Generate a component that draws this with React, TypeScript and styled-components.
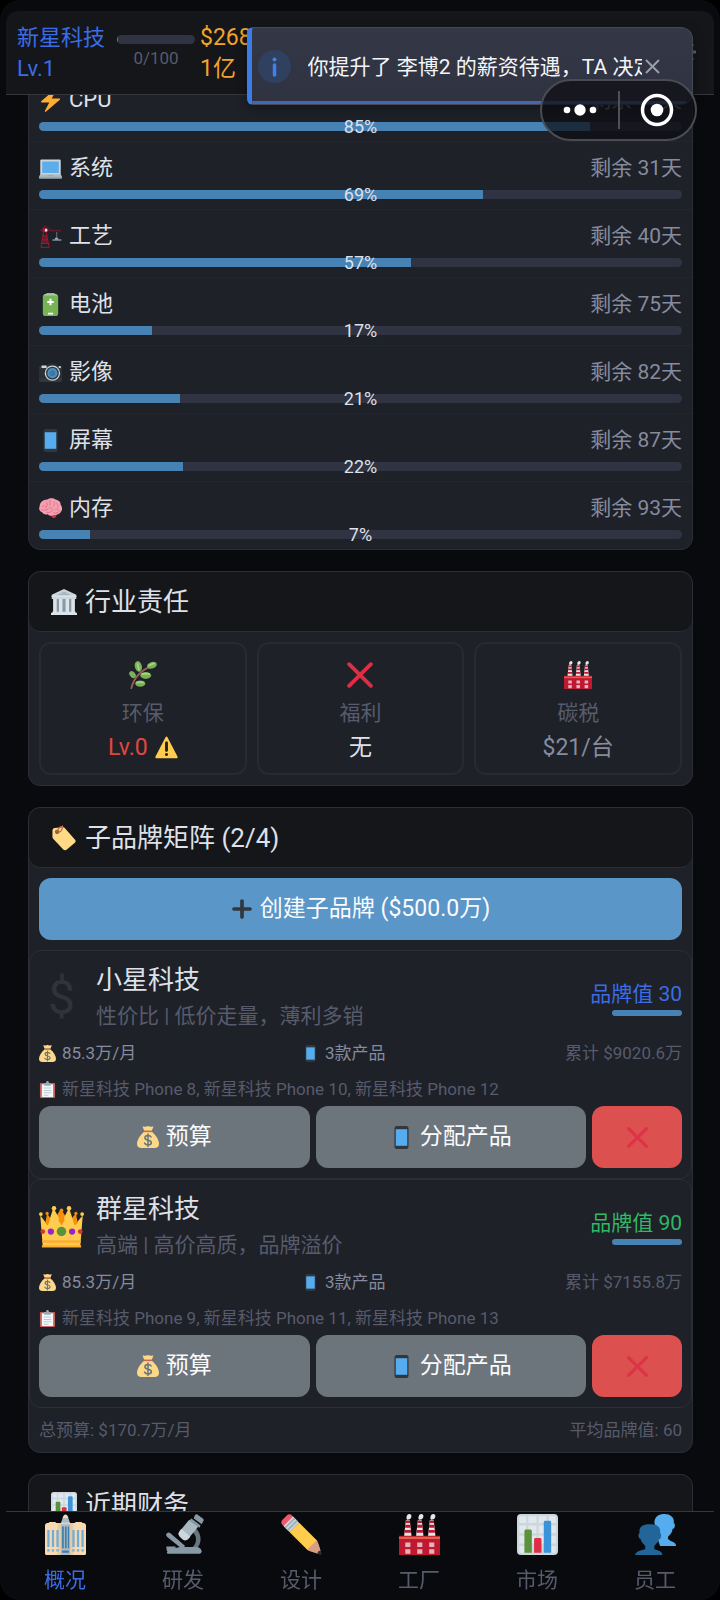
import React from "react";
import styled, { createGlobalStyle } from "styled-components";

const c = {
  page: "#090a0e",
  bar: "#15161a",
  card: "#1e2128",
  line: "#2b2e35",
  track: "#303341",
  fill: "#4682b4",
  text: "#dfe0e8",
  muted: "#868b9d",
  dim: "#575b6c",
  blue: "#3a6de6",
  orange: "#f2a32c",
  green: "#2fb866",
  red: "#e0483f",
};

const GlobalStyle = createGlobalStyle`
  *, *::before, *::after { box-sizing: border-box; }
  html, body { margin: 0; background: #000; }
  body {
    overflow: hidden;
    color: ${c.text};
    font-family: Roboto, "Noto Sans CJK SC", sans-serif;
    font-size: 22px;
    line-height: 32px;
  }
  button { font: inherit; color: inherit; border: 0; padding: 0; margin: 0; background: none; cursor: pointer; }
  h2, h3, p { margin: 0; font-weight: 400; }
`;

/* ---------- icons ---------- */

const Svg = styled.svg<{ $size: number }>`
  display: block;
  flex: none;
  width: ${(p) => p.$size}px;
  height: ${(p) => p.$size}px;
`;

const glyphs: Record<string, React.ReactNode> = {
  bolt: (
    <path fill="#FFAC33" d="M32.938 15.651C32.792 15.26 32.418 15 32 15H19.925L26.89 1.458c.219-.426.106-.947-.271-1.243C26.437.071 26.218 0 26 0c-.233 0-.466.082-.653.243L18 6.588 3.347 19.243c-.316.273-.43.714-.284 1.105S3.582 21 4 21h12.075L9.11 34.542c-.219.426-.106.947.271 1.243.182.144.401.215.619.215.233 0 .466-.082.653-.243L18 29.412l14.653-12.655c.317-.273.43-.714.285-1.106z" />
  ),
  laptop: (
    <>
      <path fill="#CCD6DD" d="M34 29.1c0 1-1 1.9-2 1.9H4c-1 0-2-.9-2-1.9V5.9C2 4.900 3 4 4 4h28c1 0 2 .9 2 1.900z" />
      <path fill="#5DADEC" d="M5 7h26v18H5z" />
      <path fill="#AEBBC1" d="M2 27h32l2 4v2H0v-2z" />
      <path fill="#9AAAB4" d="M0 31h36v2c0 .6-.5 1-1 1H1c-.5 0-1-.4-1-1zM14 28h8l1 2H13z" />
    </>
  ),
  crane: (
    <>
      <path fill="none" stroke="#A0192F" strokeWidth="1.500" d="M7 11L3 35M11 11l5 24M6 17h7M5 23h9M4 29h11M6 17l8 6M13 17l-8 6M5 23l10 6M14 23L4 29M3 35h13" />
      <path fill="none" stroke="#7A1A2B" strokeWidth="1.400" d="M9 1L2 9h32M9 1l12 8M9 1v8M23 7v3M28 7v3M33 7v3" />
      <path fill="#BE1931" d="M6 5h6v6H6z" />
      <path fill="#E6E7E8" d="M9.500 6h3.500v4H9.500z" />
      <path fill="#66757F" d="M27 11h1.500v11H27zM21 22h14v3H21z" />
      <path fill="#99AAB5" d="M25 20h5v3h-5z" />
    </>
  ),
  battery: (
    <>
      <path fill="#99AAB5" d="M12 0h12v4H12z" />
      <rect x="6" y="2" width="24" height="34" rx="4" fill="#77B255" />
      <path fill="#A6C9B0" d="M7 4c1-2 3-3 5-3h12c2 0 4 1 5 3z" />
      <path fill="#FFF" d="M16.500 9h3v3.500H23v3h-3.500V19h-3v-3.500H13v-3h3.500zM14 31h8v2.500h-8z" />
    </>
  ),
  camera: (
    <>
      <path fill="#31373D" d="M2 8h32c1 0 2 1 2 2v20c0 2-1 3-3 3H3c-2 0-3-1-3-3V10c0-1 1-2 2-2z" />
      <path fill="#292F33" d="M12 8l3-4h12l3 4zM0 13h36v14H0z" />
      <path fill="#CCD6DD" d="M4 7h8v4H4zM31 8h3v3h-3z" />
      <circle cx="21" cy="19" r="12" fill="#CCD6DD" />
      <circle cx="21" cy="19" r="10" fill="#31373D" />
      <circle cx="21" cy="19" r="8" fill="#4A8FC0" />
      <circle cx="21" cy="19" r="4.500" fill="#3B78A8" />
    </>
  ),
  phone: (
    <>
      <path fill="#31373D" d="M11 36s-4 0-4-4V4s0-4 4-4h14s4 0 4 4v28s0 4-4 4H11z" />
      <path fill="#55ACEE" d="M9 5h18v26H9z" />
    </>
  ),
  brain: (
    <>
      <path fill="#DD2E44" d="M19 27c2-1 6-1 8 0 1 3-1 6-4 6-2 0-2-2-4-3z" />
      <path fill="#F4A0B0" d="M13 4c4-3 10-2 13 0 5 1 8 4 8 8 3 4 3 9-1 13-3 3-7 3-10 3-3 2-7 2-9-1-4 1-8 0-9-3-4-1-6-5-4-9 0-6 5-11 12-11z" />
      <path fill="none" stroke="#E0758A" strokeWidth="1.500" strokeLinecap="round" d="M5 15c3-3 6-1 6 2M11 8c2 1 3 4 1 7M17 5v8M16 17c3-1 5 1 5 4M23 7c2 2 2 6-1 8M27 10c3 1 4 5 2 7M4 20c4 1 8 1 10-1M12 24c3 1 7 0 8-2M25 20c2-2 6-1 7 2M23 25c4 1 7-1 8-2" />
    </>
  ),
  hall: (
    <>
      <path fill="#66757F" d="M3 14h30v17H3z" />
      <path fill="#8899A6" d="M8 14h3v17H8zM16 14h4v17h-4zM25 14h3v17h-3z" />
      <path fill="#CCD6DD" d="M18 0L1 8v6h34V8z" />
      <path fill="#AAB8C2" d="M18 3L7 9h22z" />
      <path fill="#DCE4E9" d="M3 14h5v17H3zM11 14h5v17h-5zM20 14h5v17h-5zM28 14h5v17h-5zM2 31h32v2H2zM0 33h36v3H0zM1 9h34v2H1z" />
    </>
  ),
  herb: (
    <>
      <path fill="none" stroke="#A0605A" strokeWidth="2.200" strokeLinecap="round" d="M3 35c3-13 12-23 27-29" />
      <g fill="#77B255">
        <ellipse cx="12" cy="7" rx="4.500" ry="7" transform="rotate(-14 12 7)" />
        <ellipse cx="4.500" cy="17.500" rx="3.500" ry="5" transform="rotate(-40 4.500 17.500)" />
        <ellipse cx="29.500" cy="5.500" rx="6.500" ry="4.200" transform="rotate(-20 29.500 5.500)" />
        <ellipse cx="21.500" cy="18.500" rx="7" ry="4.500" />
        <ellipse cx="14.500" cy="29" rx="6.500" ry="4" />
      </g>
      <path fill="none" stroke="#A6D388" strokeWidth="2.200" d="M11 3c0 3 1 6 2 9M25 6c3-1 6-3 8-3M16 17c4-1 8-1 11 0M9 28c4-1 7-1 10 0" />
    </>
  ),
  cross: (
    <path fill="#DD2E44" d="M21.533 18.002L33.768 5.768c.976-.976.976-2.559 0-3.535-.977-.977-2.559-.977-3.535 0L17.998 14.467 5.764 2.233c-.976-.977-2.56-.977-3.535 0-.977.976-.977 2.559 0 3.535l12.234 12.234L2.201 30.265c-.977.977-.977 2.559 0 3.535.488.488 1.128.732 1.768.732s1.280-.244 1.768-.732l12.262-12.262 12.234 12.234c.488.488 1.128.732 1.768.732.64 0 1.279-.244 1.768-.732.976-.977.976-2.559 0-3.535L21.533 18.002z" />
  ),
  factory: (
    <>
      <path fill="#E6E7E8" d="M6 5.500h3.500l1.500 14H4.500zM16.500 5.500H20l1.500 14H15zM27 5.500h3.500l1.500 14h-6.500z" />
      <path fill="#BE1931" d="M5.800 6h4v2h-4zM5.400 9.500h4.800V12H5.400zM5 14h5.500v2.500H5zM16.300 6h4v2h-4zM15.900 9.500h4.800V12h-4.800zM15.500 14H21v2.500h-5.500zM26.800 6h4v2h-4zM26.400 9.500h4.800V12h-4.800zM26 14h5.500v2.500H26z" />
      <path fill="#E6E7E8" d="M7 5c-1-2 0-5 2-5 3 0 2 4 .5 4.500zM17.500 5c-1-2 0-5 2-5 3 0 2 4 .5 4.500zM28 5c-1-2 0-5 2-5 3 0 2 4 .5 4.500z" />
      <path fill="#BE1931" d="M0 19h36v17c0 1-1 1-1 1H1s-1 0-1-1z" />
      <path fill="#E0604A" d="M0 20h36v2H0z" />
      <path fill="#E1B4BC" d="M5.500 25H10v4H5.500zM16 25h4.500v4H16zM26.500 25H31v4h-4.500zM5.500 31H10v4H5.500zM16 31h4.500v4H16zM26.500 31H31v4h-4.500z" />
    </>
  ),
  warning: (
    <>
      <path fill="#FFCC4D" d="M2.653 35C.811 35-.001 33.662.847 32.027L16.456 1.972c.849-1.635 2.238-1.635 3.087 0l15.609 30.056c.85 1.634.037 2.972-1.805 2.972H2.653z" />
      <path fill="#231F20" d="M15.583 28.953c0-1.333 1.085-2.418 2.419-2.418 1.333 0 2.418 1.085 2.418 2.418 0 1.334-1.086 2.419-2.418 2.419-1.334 0-2.419-1.085-2.419-2.419zm.186-18.293c0-1.302.961-2.108 2.232-2.108 1.241 0 2.233.837 2.233 2.108v11.938c0 1.271-.992 2.108-2.233 2.108-1.271 0-2.232-.807-2.232-2.108V10.66z" />
    </>
  ),
  tag: (
    <>
      <path fill="#FFD983" d="M2 8c0-2 1-4 3-4l11-1c1 0 2 0 3 1l14 16c1.500 1.500 1.500 3 0 4.500L22 34c-1.500 1.500-3.500 1.500-5 0L3 19c-1-1-1-2-1-3z" />
      <circle cx="8.500" cy="9.500" r="3" fill="#7C5A3A" />
      <path fill="none" stroke="#C1694F" strokeWidth="1.600" strokeLinecap="round" d="M8 9c2-4 5-7 8-7M9 10c4 0 7-3 7-9" />
    </>
  ),
  plus: (
    <path fill="#31373D" d="M31 15H21V5c0-1.657-1.343-3-3-3s-3 1.343-3 3v10H5c-1.657 0-3 1.343-3 3s1.343 3 3 3h10v10c0 1.657 1.343 3 3 3s3-1.343 3-3V21h10c1.657 0 3-1.343 3-3s-1.343-3-3-3z" />
  ),
  bag: (
    <>
      <path fill="#FDD888" d="M12 9h12c7 6 12 14 12 20 0 5-3 7-7 7H7c-4 0-7-2-7-7C0 23 5 15 12 9z" />
      <path fill="#FDD888" d="M9 1c3-1 4 1 6 0s4-1 6 0 4-1 6 0l-3 7H12z" />
      <path fill="#BF6952" d="M11 7.500h14v2.500H11z" />
      <path fill="none" stroke="#67757F" strokeWidth="2.500" strokeLinecap="round" d="M23 18c-1-2-3-2.500-5-2.500-3 0-5 1.500-5 4 0 5 10.500 2.500 10.500 7.500 0 2.500-2.500 4-5.500 4-2.500 0-4.500-1-5.500-3M18 13v20.500" />
    </>
  ),
  clipboard: (
    <>
      <rect x="2" y="4" width="32" height="32" rx="2" fill="#C1605A" />
      <path fill="#F5F8FA" d="M6 7h24v27H6z" />
      <path fill="#99AAB5" d="M11 4h4c0-5 6-5 6 0h4v6H11z" />
      <path fill="#BFC9D1" d="M10 14h16v2H10zM10 19h16v2H10zM10 24h16v2H10zM10 29h10v2H10z" />
    </>
  ),
  crown: (
    <>
      <path fill="#F4900C" d="M7 16l-1-9 5 7 6.500-10L24 14l6-7-1 10z" />
      <path fill="#FFCC4D" d="M3 34L1 9l6 8 4.500-14L18 15l6-12 4.500 14 6.500-8-2 25z" />
      <g fill="#FFCC4D">
        <circle cx="1.500" cy="8" r="1.500" />
        <circle cx="34.500" cy="8" r="1.500" />
        <circle cx="12" cy="3.300" r="1.800" />
        <circle cx="24" cy="3.300" r="1.800" />
      </g>
      <g fill="#F4900C">
        <circle cx="6.500" cy="7.500" r="1.300" />
        <circle cx="18" cy="5" r="1.500" />
        <circle cx="29.500" cy="7.500" r="1.300" />
        <path d="M18 6l2.500 7L18 17l-2.500-4zM6.500 8l2.500 4-2 5-2-2zM29.500 8L27 12l2 5 2-2z" />
      </g>
      <path fill="#FFAC33" d="M2.500 29h31l-.3 2H2.800zM2.300 33h31.400v1.700H2.300z" />
      <circle cx="18" cy="22" r="3.800" fill="#5C913B" />
      <circle cx="9.500" cy="22" r="2.500" fill="#9226CC" />
      <circle cx="26.500" cy="22" r="2.500" fill="#9226CC" />
      <circle cx="3" cy="22" r="1.900" fill="#DD2E44" />
      <circle cx="33" cy="22" r="1.900" fill="#DD2E44" />
    </>
  ),
  city: (
    <>
      <path fill="#F7D9B4" d="M0 10c0-1 1-2 2-2h1l1-1h5l1 1h2v27c0 1-1 1-1 1H1s-1 0-1-1zM24 8h2l1-1h5l1 1h1c1 0 2 1 2 2v25c0 1-1 1-1 1H24z" />
      <path fill="#E8CBA6" d="M11 8h4v28h-4zM21 8h4v28h-4z" />
      <path fill="#AEBBC1" d="M14 8l1-3c1-5 5-5 6 0l1 3v28h-8z" />
      <path fill="#F7D9B4" d="M15.500 3.500c1-4 4-4 5 0z" />
      <path fill="#6FAED6" d="M2 14h2v15H2zM6 14h2v15H6zM10 14h2v15h-2zM24 14h2v15h-2zM28 14h2v15h-2zM32 14h2v15h-2zM2 31h2v2H2zM6 31h2v2H6zM10 31h2v2h-2zM24 31h2v2h-2zM28 31h2v2h-2zM32 31h2v2h-2z" />
      <path fill="#3B7FB0" d="M15 11h1.500v19H15zM17.500 11H19v19h-1.500zM20 11h1.200v19H20zM15 32h6v2h-6z" />
      <path fill="#CCD6DD" d="M14 7.500h8V9h-8z" />
    </>
  ),
  microscope: (
    <>
      <path fill="#66757F" d="M19 33c7-2 10-6 10-11 0-3-2-6-5-8l2-3c5 2 7 7 7 11 0 6-4 10-8 12z" />
      <path fill="#8899A6" d="M4 33c-2-2 0-4 2-4l4 1 5-1h14c3 0 5 2 5 4 0 1-1 2-2 2H5c-2 0-2-1-1-2z" />
      <path fill="#8899A6" d="M3.500 17c1-1 2-1 3 0l13 11-3 2.500L3.500 20c-1-1-1-2 0-3zM3 28.500h8v2H3z" />
      <path fill="#AAB8C2" d="M23 5l8 6-9 11c-2 2-4 1-6-1s-3-3-2-5z" />
      <path fill="#CCD6DD" d="M16 13l8 7-2 2c-2 2-4 1-6-1s-3-3-2-5z" />
      <path fill="#8899A6" d="M28 1c1-1 2-1 3 0l4 3c1 1 1 2 0 3l-1 2-7-5zM25 4l8 6-1 2-9-6z" />
    </>
  ),
  pencil: (
    <>
      <path fill="#D99E82" d="M35.222 33.598c-.647-2.101-1.705-6.059-2.325-7.566-.501-1.216-.969-2.438-1.544-3.014-.575-.575-1.553-.53-2.143.058 0 0-2.469 1.675-3.354 2.783-1.108.882-2.785 3.357-2.785 3.357-.59.59-.635 1.567-.06 2.143.576.575 1.798 1.043 3.015 1.544 1.506.62 5.465 1.676 7.566 2.325.359.11 1.740-1.271 1.630-1.630z" />
      <path fill="#EA596E" d="M13.643 5.308c1.151 1.151 1.151 3.016 0 4.167l-4.167 4.168c-1.151 1.150-3.018 1.150-4.167 0L1.141 9.475c-1.150-1.151-1.150-3.016 0-4.167l4.167-4.167c1.150-1.151 3.016-1.151 4.167 0l4.168 4.167z" />
      <path fill="#FFCC4D" d="M31.353 23.018l-4.170 4.170-4.163 4.165L7.392 15.726l8.335-8.334 15.626 15.626z" />
      <path fill="#292F33" d="M32.078 34.763s2.709 1.489 3.441.757c.732-.732-.765-3.435-.765-3.435s-2.566.048-2.676 2.678z" />
      <path fill="#CCD6DD" d="M2.183 10.517l8.335-8.335 5.208 5.209-8.334 8.335z" />
      <path fill="#99AAB5" d="M3.225 11.558l8.334-8.334 1.042 1.042L4.267 12.600zm2.083 2.086l8.335-8.335 1.042 1.042-8.335 8.334z" />
    </>
  ),
  chart: (
    <>
      <rect width="36" height="36" rx="3.500" fill="#CCD6DD" />
      <path fill="#E1E8ED" d="M2 2h6v6H2zM10 2h7v6h-7zM19 2h7v6h-7zM28 2h6v6h-6zM2 10h6v7H2zM10 10h7v7h-7zM19 10h7v7h-7zM28 10h6v7h-6zM2 19h6v7H2zM10 19h7v7h-7zM19 19h7v7h-7zM28 19h6v7h-6zM2 28h6v6H2zM28 28h6v6h-6z" />
      <path fill="#5C913B" d="M6.500 15c0-1 .5-1.500 1.500-1.500h3.500c1 0 1.500.5 1.500 1.500v19H6.500z" />
      <path fill="#DD2E44" d="M15 22.500c0-1 .5-1.500 1.500-1.500H20c1 0 1.500.5 1.500 1.500V34H15z" />
      <path fill="#3B94D9" d="M23.500 7.500c0-1 .5-1.500 1.500-1.500h3.500c1 0 1.500.5 1.500 1.500V34h-6.500z" />
    </>
  ),
  people: (
    <>
      <path fill="#55ACEE" d="M36 28c0-3-3-4-7-5v-3c2-2 4-4 4-7 1 0 2-1 2-3s-1-2-1-2C35 3 31 0 26 0s-9 2-9 8l7 19z" />
      <path fill="#55ACEE" d="M20 22h9l7 5.500V28H22z" />
      <path fill="#226699" d="M24 36c0-3-3-4-7-5v-3c2-2 4-4 4-6 1 0 2-2 2-3 0-2-1-2-1-2 1-6-3-8-9-8s-10 2-9 8c0 0-1 0-1 2 0 1 1 3 2 3 0 2 2 4 4 6v3c-5 1-8 2-9 5z" />
    </>
  ),
};

const Icon = ({ name, size }: { name: string; size: number }) => (
  <Svg $size={size} viewBox="0 0 36 36" aria-hidden="true">
    {glyphs[name]}
  </Svg>
);

/* ---------- frame ---------- */

const Shell = styled.div`
  height: 100vh;
  overflow: hidden;
  border-radius: 20px;
  background: ${c.page};
`;

const TopBar = styled.header`
  position: fixed;
  inset: 0 0 auto;
  z-index: 1;
  padding: 11px 6px 0;
  background: ${c.page};
  border-radius: 20px 20px 0 0;
`;

const TopBarInner = styled.div`
  display: flex;
  align-items: flex-start;
  gap: 5px;
  padding: 11px 17px 10px 11px;
  line-height: 31px;
  background: ${c.bar};
  border-bottom: 1px solid #35373d;
  border-radius: 12px 12px 0 0;
`;

const Company = styled.div`
  width: 95px;
  color: ${c.blue};
`;

const Experience = styled.div`
  width: 78px;
  padding-top: 13px;
  color: ${c.dim};
  font-size: 17px;
  line-height: 28px;
  text-align: center;
`;

const Money = styled.div`
  width: 64px;
  color: ${c.orange};
  font-size: 23px;
  word-break: break-all;
`;

const GearButton = styled.button`
  display: flex;
  margin-left: auto;
  padding-top: 18px;
  color: #5d5f66;
`;

const Main = styled.main`
  display: flex;
  flex-direction: column;
  gap: 21px;
  padding: 73px 27px 88px 28px;
`;

/* ---------- cards ---------- */

const Card = styled.section`
  background: ${c.card};
  border: 1px solid ${c.line};
  border-radius: 12px;
`;

const CardTitle = styled.h2`
  display: flex;
  align-items: center;
  gap: 8px;
  padding: 15px 22px 14px;
  font-size: 26px;
  line-height: 30px;
  background: ${c.bar};
  border-bottom: 1px solid ${c.line};
  border-radius: 12px;
`;

const Track = styled.div<{ $height: number }>`
  height: ${(p) => p.$height}px;
  overflow: hidden;
  background: ${c.track};
  border-radius: 5px;
`;

const Fill = styled.div`
  height: 100%;
  background: ${c.fill};
`;

const ResearchRow = styled.div`
  padding: 10px;
  border-bottom: 1px solid #23262d;
  &:last-child { border-bottom: 0; }
`;

const ResearchHead = styled.div`
  display: flex;
  align-items: center;
  gap: 7px;
  margin-bottom: 6px;
`;

const Remaining = styled.span`
  margin-left: auto;
  color: ${c.muted};
  font-size: 21px;
`;

const Meter = styled.div`
  position: relative;
`;

const Percent = styled.span`
  position: absolute;
  inset: -8px 0;
  font-size: 18px;
  line-height: 25px;
  text-align: center;
`;

const DutyGrid = styled.div`
  display: grid;
  grid-template-columns: repeat(3, 1fr);
  gap: 10px;
  padding: 10px;
`;

const Duty = styled.div`
  display: flex;
  flex-direction: column;
  align-items: center;
  padding: 9px 10px 8px;
  border: 2px solid #272a31;
  border-radius: 12px;
`;

const DutyIcon = styled.div`
  display: flex;
  align-items: center;
  height: 43px;
`;

const DutyLabel = styled.div`
  color: ${c.dim};
  font-size: 21px;
  line-height: 34px;
`;

const DutyValue = styled.div<{ $color: string }>`
  display: flex;
  align-items: center;
  gap: 7px;
  font-size: 23px;
  line-height: 35px;
  color: ${(p) => p.$color};
`;

const tones = { primary: "#5b96c8", neutral: "#6c747c", danger: "#dc5050" };

const Button = styled.button<{ $tone: keyof typeof tones }>`
  display: flex;
  align-items: center;
  justify-content: center;
  gap: 7px;
  width: 100%;
  height: 62px;
  color: #fafbfd;
  font-size: 23px;
  background: ${(p) => tones[p.$tone]};
  border-radius: 12px;
`;

const Padded = styled.div`
  padding: 10px;
`;

const Brand = styled.article`
  padding: 10px 9px;
  border: 1px solid ${c.line};
  border-radius: 12px;
`;

const BrandHead = styled.div`
  display: flex;
  align-items: center;
  gap: 12px;
`;

const Emblem = styled.div`
  display: flex;
  justify-content: center;
  width: 45px;
  color: #30333b;
  font-size: 48px;
`;

const BrandName = styled.h3`
  font-size: 26px;
  line-height: 38px;
`;

const BrandMotto = styled.p`
  color: ${c.dim};
  font-size: 21px;
  line-height: 35px;
`;

const BrandScore = styled.div<{ $color: string }>`
  display: flex;
  flex-direction: column;
  align-items: flex-end;
  gap: 1px;
  margin-left: auto;
  color: ${(p) => p.$color};
  font-size: 21px;
  line-height: 30px;
`;

const ScoreBar = styled.div`
  width: 70px;
`;

const Stats = styled.div`
  display: grid;
  grid-template-columns: 1fr 1fr auto;
  padding-top: 2px;
  color: ${c.muted};
  font-size: 17px;
  line-height: 34px;
`;

const Products = styled.div`
  padding-top: 2px;
  color: ${c.dim};
  font-size: 17px;
  line-height: 34px;
`;

const WithIcon = styled.span`
  display: flex;
  align-items: center;
  gap: 6px;
`;

const Faint = styled.span`
  color: ${c.dim};
`;

const Actions = styled.div`
  display: grid;
  grid-template-columns: 1fr 1fr 90px;
  gap: 6px;
`;

const DangerMark = styled.span`
  display: flex;
  opacity: 0.8;
`;

const Totals = styled.div`
  display: flex;
  justify-content: space-between;
  padding: 10px;
  color: ${c.dim};
  font-size: 17px;
  line-height: 24px;
`;

/* ---------- bottom navigation ---------- */

const Nav = styled.nav`
  position: fixed;
  inset: auto 0 0;
  padding: 0 6px;
  background: ${c.page};
  border-radius: 0 0 20px 20px;
`;

const NavInner = styled.div`
  display: grid;
  grid-template-columns: repeat(6, 1fr);
  padding: 2px 0 4px;
  border-top: 1px solid #35373d;
`;

const NavItem = styled.button<{ $active: boolean }>`
  display: flex;
  flex-direction: column;
  align-items: center;
  gap: 9px;
  color: ${(p) => (p.$active ? c.blue : c.dim)};
  font-size: 21px;
`;

/* ---------- toast and host capsule ---------- */

const Toast = styled.div`
  position: fixed;
  top: 27px;
  right: 27px;
  z-index: 2;
  width: 62%;
  overflow: hidden;
  background: linear-gradient(#343846, #2f3341);
  border: 1px solid #454955;
  border-left: 5px solid #3b7de8;
  border-radius: 6px 12px 12px 6px;
  box-shadow: 0 4px 12px rgba(0, 0, 0, 0.35);
`;

const ToastBody = styled.div`
  display: flex;
  align-items: center;
  height: 73px;
  padding: 4px 32px 0 6px;
`;

const ToastText = styled.p`
  flex: 1;
  min-width: 0;
  margin-left: 17px;
  overflow: hidden;
  white-space: nowrap;
  color: #f3f4f8;
  font-size: 21px;
`;

const ToastClose = styled.button`
  display: flex;
  margin-left: 3px;
  color: #9a9eaa;
`;

const ToastTimer = styled.div`
  height: 3px;
  margin-right: 6px;
  background: #4466b4;
`;

const Capsule = styled.div`
  position: fixed;
  top: 79px;
  right: 23px;
  z-index: 3;
  display: grid;
  grid-template-columns: 1fr 2px 1fr;
  align-items: center;
  width: 157px;
  height: 62px;
  background: rgba(12, 13, 18, 0.72);
  border: 2px solid #4a4c52;
  border-radius: 31px;
`;

const CapsuleButton = styled.button`
  display: flex;
  justify-content: center;
`;

const CapsuleRule = styled.span`
  height: 38px;
  background: #4f5157;
`;

/* ---------- data ---------- */

const research = [
  { icon: "bolt", name: "CPU", days: 10, pct: 85, progress: 85.7 },
  { icon: "laptop", name: "系统", days: 31, pct: 69, progress: 69.1 },
  { icon: "crane", name: "工艺", days: 40, pct: 57, progress: 57.9 },
  { icon: "battery", name: "电池", days: 75, pct: 17, progress: 17.6 },
  { icon: "camera", name: "影像", days: 82, pct: 21, progress: 21.9 },
  { icon: "phone", name: "屏幕", days: 87, pct: 22, progress: 22.4 },
  { icon: "brain", name: "内存", days: 93, pct: 7, progress: 7.9 },
];

const duties = [
  { icon: "herb", label: "环保", value: "Lv.0", color: c.red, warn: true },
  { icon: "cross", label: "福利", value: "无", color: c.text, warn: false },
  { icon: "factory", label: "碳税", value: "$21/台", color: c.muted, warn: false },
];

const brands = [
  {
    name: "小星科技",
    emblem: "$",
    motto: "性价比 | 低价走量，薄利多销",
    score: 30,
    color: c.blue,
    total: "累计 $9020.6万",
    products: "新星科技 Phone 8, 新星科技 Phone 10, 新星科技 Phone 12",
  },
  {
    name: "群星科技",
    emblem: "",
    motto: "高端 | 高价高质，品牌溢价",
    score: 90,
    color: c.green,
    total: "累计 $7155.8万",
    products: "新星科技 Phone 9, 新星科技 Phone 11, 新星科技 Phone 13",
  },
];

const tabs = [
  ["city", "概况"],
  ["microscope", "研发"],
  ["pencil", "设计"],
  ["factory", "工厂"],
  ["chart", "市场"],
  ["people", "员工"],
];

export default function App() {
  return (
    <Shell>
      <GlobalStyle />

      <TopBar>
        <TopBarInner>
          <Company>新星科技 Lv.1</Company>
          <Experience>
            <Track $height={9}>
              <Fill style={{ width: "1%" }} />
            </Track>
            0/100
          </Experience>
          <Money>$268.1亿</Money>
          <GearButton aria-label="设置">
            <svg width="24" height="24" viewBox="0 0 24 24" fill="none" stroke="currentColor" strokeWidth="3">
              <circle cx="12" cy="12" r="6" />
              <path d="M12 1v5M12 18v5M1 12h5M18 12h5M4 4l4 4M16 16l4 4M20 4l-4 4M8 16l-4 4" />
            </svg>
          </GearButton>
        </TopBarInner>
      </TopBar>

      <Main>
        <Card>
          {research.map((r) => (
            <ResearchRow key={r.name}>
              <ResearchHead>
                <Icon name={r.icon} size={23} />
                <span>{r.name}</span>
                <Remaining>剩余 {r.days}天</Remaining>
              </ResearchHead>
              <Meter role="progressbar" aria-label={r.name} aria-valuenow={r.pct}>
                <Track $height={9}>
                  <Fill style={{ width: `${r.progress}%` }} />
                </Track>
                <Percent>{r.pct}%</Percent>
              </Meter>
            </ResearchRow>
          ))}
        </Card>

        <Card>
          <CardTitle>
            <Icon name="hall" size={26} />
            行业责任
          </CardTitle>
          <DutyGrid>
            {duties.map((d) => (
              <Duty key={d.label}>
                <DutyIcon>
                  <Icon name={d.icon} size={28} />
                </DutyIcon>
                <DutyLabel>{d.label}</DutyLabel>
                <DutyValue $color={d.color}>
                  {d.value}
                  {d.warn && <Icon name="warning" size={23} />}
                </DutyValue>
              </Duty>
            ))}
          </DutyGrid>
        </Card>

        <Card>
          <CardTitle>
            <Icon name="tag" size={26} />
            子品牌矩阵 (2/4)
          </CardTitle>
          <Padded>
            <Button $tone="primary">
              <Icon name="plus" size={22} />
              创建子品牌 ($500.0万)
            </Button>
          </Padded>
          {brands.map((b) => (
            <Brand key={b.name}>
              <BrandHead>
                <Emblem>{b.emblem || <Icon name="crown" size={45} />}</Emblem>
                <div>
                  <BrandName>{b.name}</BrandName>
                  <BrandMotto>{b.motto}</BrandMotto>
                </div>
                <BrandScore $color={b.color}>
                  品牌值 {b.score}
                  <ScoreBar>
                    <Track $height={6}>
                      <Fill style={{ width: "100%" }} />
                    </Track>
                  </ScoreBar>
                </BrandScore>
              </BrandHead>
              <Stats>
                <WithIcon>
                  <Icon name="bag" size={17} />
                  85.3万/月
                </WithIcon>
                <WithIcon>
                  <Icon name="phone" size={17} />
                  3款产品
                </WithIcon>
                <Faint>{b.total}</Faint>
              </Stats>
              <Products>
                <WithIcon>
                  <Icon name="clipboard" size={17} />
                  {b.products}
                </WithIcon>
              </Products>
              <Actions>
                <Button $tone="neutral">
                  <Icon name="bag" size={22} />
                  预算
                </Button>
                <Button $tone="neutral">
                  <Icon name="phone" size={23} />
                  分配产品
                </Button>
                <Button $tone="danger" aria-label="删除">
                  <DangerMark>
                    <Icon name="cross" size={23} />
                  </DangerMark>
                </Button>
              </Actions>
            </Brand>
          ))}
          <Totals>
            <span>总预算: $170.7万/月</span>
            <span>平均品牌值: 60</span>
          </Totals>
        </Card>

        <Card>
          <CardTitle>
            <Icon name="chart" size={26} />
            近期财务
          </CardTitle>
        </Card>
      </Main>

      <Nav>
        <NavInner>
          {tabs.map(([icon, label], i) => (
            <NavItem key={label} $active={i === 0}>
              <Icon name={icon} size={41} />
              {label}
            </NavItem>
          ))}
        </NavInner>
      </Nav>

      <Toast role="status">
        <ToastBody>
          <svg width="33" height="33" viewBox="0 0 33 33" aria-hidden="true">
            <circle cx="16.500" cy="16.500" r="16.500" fill="#30405f" />
            <circle cx="16.500" cy="9.500" r="2" fill="#4080ee" />
            <path d="M16.500 15v10" stroke="#4080ee" strokeWidth="3.500" strokeLinecap="round" />
          </svg>
          <ToastText>你提升了 李博2 的薪资待遇，TA 决定</ToastText>
          <ToastClose aria-label="关闭">
            <svg width="15" height="15" viewBox="0 0 15 15" fill="none" stroke="currentColor" strokeWidth="2">
              <path d="M1 1l13 13M14 1L1 14" />
            </svg>
          </ToastClose>
        </ToastBody>
        <ToastTimer />
      </Toast>

      <Capsule>
        <CapsuleButton aria-label="更多">
          <svg width="34" height="12" viewBox="0 0 34 12" fill="#fff">
            <circle cx="4" cy="6" r="3.300" />
            <circle cx="17" cy="6" r="5.700" />
            <circle cx="30" cy="6" r="3.300" />
          </svg>
        </CapsuleButton>
        <CapsuleRule />
        <CapsuleButton aria-label="退出">
          <svg width="34" height="34" viewBox="0 0 34 34" fill="none">
            <circle cx="17" cy="17" r="14.500" stroke="#fff" strokeWidth="3.500" />
            <circle cx="17" cy="17" r="6.300" fill="#fff" />
          </svg>
        </CapsuleButton>
      </Capsule>
    </Shell>
  );
}
